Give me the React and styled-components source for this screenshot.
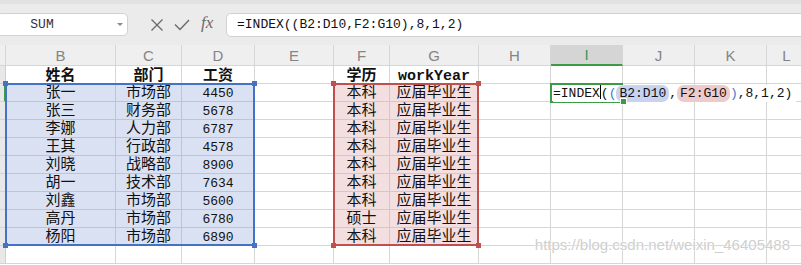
import styled, { createGlobalStyle } from "styled-components";

const mono = `"Liberation Mono", "Noto Sans CJK SC", monospace`;

const GlobalStyle = createGlobalStyle`
  html, body {
    margin: 0;
    padding: 0;
    background: #fff;
  }
  body {
    width: 801px;
    height: 265px;
    overflow: hidden;
    font-family: ${mono};
  }
`;

const Page = styled.div`
  position: relative;
  width: 801px;
  height: 265px;
  overflow: hidden;
`;

const FormulaBar = styled.div`
  height: 45px;
  box-sizing: border-box;
  background: #ebebeb;
  border-top: 4px solid #e2e2e2;
  padding-top: 9px;
  display: flex;
  align-items: flex-start;
`;

const NameBox = styled.div`
  position: relative;
  margin-left: -4px;
  width: 132px;
  height: 23px;
  box-sizing: border-box;
  background: #fff;
  border: 1px solid #d2d2d2;
  border-radius: 5px;
  padding-right: 40px;
  display: flex;
  align-items: center;
  justify-content: center;
  font-family: ${mono};
  font-size: 13px;
  color: #333;
`;

const Caret = styled.span`
  position: absolute;
  right: 4px;
  top: 9px;
  width: 0;
  height: 0;
  border-left: 3px solid transparent;
  border-right: 3px solid transparent;
  border-top: 3px solid #8a8a8a;
`;

const Tools = styled.div`
  width: 98px;
  height: 23px;
  display: flex;
  align-items: center;
  padding-left: 22px;
  box-sizing: border-box;
  gap: 10px;
`;

const FxText = styled.span`
  font-family: "Liberation Serif", serif;
  font-style: italic;
  font-size: 17px;
  color: #6a6a6a;
  margin-left: 1px;
  margin-top: -3px;
`;

const FormulaInput = styled.div`
  flex: 1;
  margin-right: -6px;
  height: 24px;
  box-sizing: border-box;
  background: #fff;
  border: 1px solid #d2d2d2;
  border-radius: 5px;
  padding-left: 10px;
  font-family: ${mono};
  font-size: 13px;
  line-height: 22px;
  color: #111;
  white-space: nowrap;
`;

const columns = [
  { key: "", w: 6 },
  { key: "B", w: 110 },
  { key: "C", w: 66 },
  { key: "D", w: 73 },
  { key: "E", w: 79 },
  { key: "F", w: 56 },
  { key: "G", w: 89 },
  { key: "H", w: 72 },
  { key: "I", w: 72 },
  { key: "J", w: 72 },
  { key: "K", w: 72 },
  { key: "L", w: 40 },
];

const Sheet = styled.div`
  display: grid;
  grid-template-columns: ${columns.map((c) => c.w + "px").join(" ")};
  grid-template-rows: 21px;
  grid-auto-rows: 18px;
  height: 220px;
  overflow: hidden;
`;

const ColHead = styled.div`
  grid-row: 1;
  grid-column: ${(p) => p.$c};
  box-sizing: border-box;
  background: ${(p) => (p.$active ? "#d5d5d5" : "#efefef")};
  border-right: 1px solid #d6d6d6;
  border-bottom: ${(p) => (p.$active ? "2px solid #3c9b46" : "1px solid #d6d6d6")};
  display: flex;
  align-items: center;
  justify-content: center;
  font-family: "Liberation Sans", sans-serif;
  font-size: 15px;
  color: ${(p) => (p.$active ? "#2f9a5a" : "#858585")};
`;

const RowHead = styled.div`
  grid-row: ${(p) => p.$r};
  grid-column: 1;
  box-sizing: border-box;
  background: #e8e8e8;
  border-right: ${(p) => (p.$active ? "2px solid #3c9b46" : "1px solid #cfcfcf")};
  border-bottom: 1px solid #d4d4d4;
`;

const tones = {
  blue: { bg: "#dae1f3", line: "#bcc4dc" },
  red: { bg: "#f3dfdf", line: "#dcc4c4" },
  none: { bg: "#fff", line: "#d6d6d6" },
};

const Cell = styled.div`
  grid-row: ${(p) => p.$r};
  grid-column: ${(p) => p.$c};
  box-sizing: border-box;
  background: ${(p) => tones[p.$tone].bg};
  border-right: 1px solid ${(p) => tones[p.$tone].line};
  border-bottom: 1px solid ${(p) => tones[p.$tone].line};
  display: flex;
  align-items: center;
  justify-content: center;
  padding-top: ${(p) => (p.$head ? "3px" : "1px")};
  font-family: ${mono};
  font-size: ${(p) => (p.$num ? "13px" : "15px")};
  font-weight: ${(p) => (p.$head ? 700 : 400)};
  color: #111;
  white-space: nowrap;
  line-height: 17px;
`;

const RangeBox = styled.div`
  grid-row: ${(p) => p.$rows};
  grid-column: ${(p) => p.$cols};
  position: relative;
  z-index: 2;
  margin: -1px 0 0 -1px;
  border: 2px solid ${(p) => p.$color};
  pointer-events: none;
`;

const Handle = styled.span`
  position: absolute;
  width: 5px;
  height: 5px;
  background: ${(p) => p.$color};
  ${(p) => (p.$top ? "top: -4px;" : "bottom: -4px;")}
  ${(p) => (p.$left ? "left: -4px;" : "right: -4px;")}
`;

const Editor = styled.div`
  grid-row: 3;
  grid-column: 9;
  position: relative;
  z-index: 3;
  margin: -1px 0 -1px -1px;
  border: 2px solid #3c9b46;
  border-right: none;
  white-space: nowrap;
  font-family: ${mono};
  font-size: 13px;
  line-height: 16px;
  color: #111;
  padding-left: 1px;
`;

const EditorText = styled.span`
  display: inline-block;
  background: #fff;
  padding-right: 4px;
`;

const Cursor = styled.span`
  display: inline-block;
  width: 1px;
  height: 14px;
  background: #000;
  vertical-align: -2px;
`;

const Paren = styled.span`
  color: #4a78c8;
`;

const Pill = styled.span`
  background: ${(p) => p.$color};
  border-radius: 7px;
  padding: 1px 3px;
`;

const FillHandle = styled.span`
  position: absolute;
  left: 68px;
  bottom: -4px;
  width: 5px;
  height: 5px;
  background: #3c9b46;
  border: 1px solid #fff;
`;

const Watermark = styled.div`
  position: absolute;
  right: 11px;
  bottom: 12px;
  font-family: "Liberation Sans", sans-serif;
  font-size: 15px;
  color: #cfcfcf;
  text-shadow: 0 0 2px #fff, 0 0 2px #fff;
  white-space: nowrap;
`;

const header = ["姓名", "部门", "工资", "", "学历", "workYear"];
const people = [
  ["张一", "市场部", "4450", "本科"],
  ["张三", "财务部", "5678", "本科"],
  ["李娜", "人力部", "6787", "本科"],
  ["王其", "行政部", "4578", "本科"],
  ["刘晓", "战略部", "8900", "本科"],
  ["胡一", "技术部", "7634", "本科"],
  ["刘鑫", "市场部", "5600", "本科"],
  ["高丹", "市场部", "6780", "硕士"],
  ["杨阳", "市场部", "6890", "本科"],
];

function rowValues(r) {
  if (r === 1) return header;
  const p = people[r - 2];
  if (!p) return [];
  return [p[0], p[1], p[2], "", p[3], "应届毕业生"];
}

function toneOf(r, c) {
  if (r >= 2 && r <= 10 && c >= 1 && c <= 3) return "blue";
  if (r >= 2 && r <= 10 && (c === 5 || c === 6)) return "red";
  return "none";
}

function CrossIcon() {
  return (
    <svg width="14" height="14" viewBox="0 0 14 14">
      <path d="M1.5 1.5 L12.5 12.5 M12.5 1.5 L1.5 12.5" stroke="#6a6a6a" strokeWidth="1.3" fill="none" />
    </svg>
  );
}

function CheckIcon() {
  return (
    <svg width="16" height="14" viewBox="0 0 16 14">
      <path d="M1 6.5 L6 11.5 L15 2" stroke="#6a6a6a" strokeWidth="1.4" fill="none" />
    </svg>
  );
}

function Range({ color, rows, cols }) {
  return (
    <RangeBox $color={color} $rows={rows} $cols={cols}>
      <Handle $color={color} $top $left />
      <Handle $color={color} $top />
      <Handle $color={color} $left />
      <Handle $color={color} />
    </RangeBox>
  );
}

export default function App() {
  const rows = Array.from({ length: 11 }, (_, i) => i + 1);
  return (
    <Page>
      <GlobalStyle />
      <FormulaBar>
        <NameBox>
          SUM
          <Caret />
        </NameBox>
        <Tools>
          <CrossIcon />
          <CheckIcon />
          <FxText>fx</FxText>
        </Tools>
        <FormulaInput>=INDEX((B2:D10,F2:G10),8,1,2)</FormulaInput>
      </FormulaBar>
      <Sheet>
        {columns.map((c, i) => (
          <ColHead key={"h" + i} $c={i + 1} $active={c.key === "I"}>
            {c.key}
          </ColHead>
        ))}
        {rows.map((r) => {
          const vals = rowValues(r);
          return columns.map((c, i) =>
            i === 0 ? (
              <RowHead key={r + "-0"} $r={r + 1} $active={r === 2} />
            ) : (
              <Cell
                key={r + "-" + i}
                $r={r + 1}
                $c={i + 1}
                $tone={toneOf(r, i)}
                $head={r === 1}
                $num={i === 3 && r > 1}
              >
                {vals[i - 1] || ""}
              </Cell>
            )
          );
        })}
        <Range color="#4472c4" rows="3 / 12" cols="2 / 5" />
        <Range color="#c0504d" rows="3 / 12" cols="6 / 8" />
        <Editor>
          <EditorText>
            =INDEX<Cursor />(<Paren>(</Paren>
            <Pill $color="#c8d4ef">B2:D10</Pill>,<Pill $color="#efcaca">F2:G10</Pill>
            <Paren>)</Paren>,8,1,2)
          </EditorText>
          <FillHandle />
        </Editor>
      </Sheet>
      <Watermark>https://blog.csdn.net/weixin_46405488</Watermark>
    </Page>
  );
}
